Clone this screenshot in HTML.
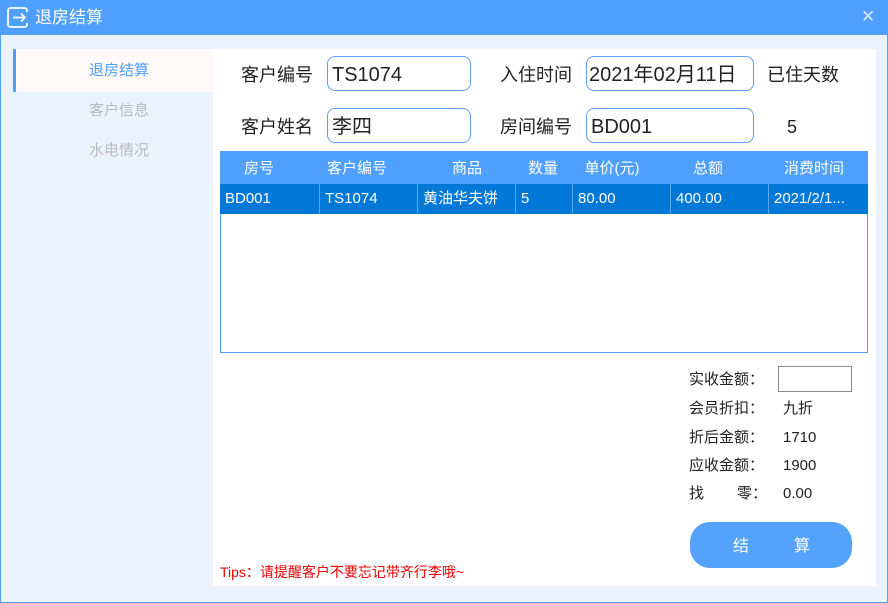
<!DOCTYPE html>
<html><head><meta charset="utf-8"><style>
*{margin:0;padding:0;box-sizing:border-box}
body{width:888px;height:603px;overflow:hidden;background:#eaf2fd;font-family:"Liberation Sans","Noto Sans CJK SC",sans-serif;position:relative;color:#222}
.a{position:absolute;white-space:nowrap;line-height:20px}
.win{position:absolute;left:0;top:0;width:888px;height:603px;border:1px solid #4f9ffe}
.title{position:absolute;left:0;top:0;width:888px;height:35px;background:#4f9ffe;color:#fff;font-size:17px}
.inp{position:absolute;border:1px solid #5d9ef5;border-radius:8px;background:#fff;font-size:20px;line-height:36px;padding-left:4px;color:#222}
.lbl{font-size:18px;color:#222;line-height:24px}
.tbl{position:absolute;left:220px;top:151px;width:648px;height:202px;border:1px solid #4f9ffe;background:#fff}
.hd,.rw{position:absolute;left:220px;width:648px;display:flex}
.hd{top:151px;height:33px;background:#4f9ffe;color:#fff;font-size:15px}
.hd div{text-align:center;line-height:36px}
.rw{top:184px;height:30px;background:#0078d7;color:#fff;font-size:15px}
.rw div{line-height:30px;padding-left:5px;border-right:1px solid #5aa7ee}
.sm{font-size:15px;color:#222}
</style></head><body>
<div class="title">
<svg class="a" style="left:7px;top:7px" width="22" height="21" viewBox="0 0 22 21"><rect x="1" y="1" width="19" height="19" rx="2.5" fill="none" stroke="#fff" stroke-width="1.8"/><rect x="12" y="5" width="10" height="11" fill="#4f9ffe"/><path d="M6 10.5h12M14 6.5l4 4-4 4" fill="none" stroke="#fff" stroke-width="1.8"/></svg>
<div class="a" style="left:35px;top:8px">退房结算</div>
<div class="a" style="left:861px;top:7px;font-size:17px;color:#dbe9ff">✕</div>
</div>
<div class="win"></div>
<div class="a" style="left:13px;top:49px;width:200px;height:43px;background:#fff9f9"></div>
<div class="a" style="left:13px;top:49px;width:3px;height:43px;background:#4f9ffe"></div>
<div class="a" style="left:89px;top:61px;font-size:15px;color:#4f9ffe">退房结算</div>
<div class="a" style="left:89px;top:101px;font-size:15px;color:#bbb">客户信息</div>
<div class="a" style="left:89px;top:141px;font-size:15px;color:#bbb">水电情况</div>
<div class="a" style="left:213px;top:49px;width:663px;height:537px;background:#fff"></div>

<div class="a lbl" style="left:241px;top:63px">客户编号</div>
<div class="inp" style="left:327px;top:56px;width:144px;height:35px">TS1074</div>
<div class="a lbl" style="left:500px;top:63px">入住时间</div>
<div class="inp" style="left:586px;top:56px;width:168px;height:35px;padding-left:2px">2021年02月11日</div>
<div class="a lbl" style="left:767px;top:63px">已住天数</div>
<div class="a lbl" style="left:241px;top:115px">客户姓名</div>
<div class="inp" style="left:327px;top:108px;width:144px;height:35px">李四</div>
<div class="a lbl" style="left:500px;top:115px">房间编号</div>
<div class="inp" style="left:586px;top:108px;width:168px;height:35px">BD001</div>
<div class="a lbl" style="left:787px;top:115px">5</div>

<div class="tbl"></div>
<div class="hd"><div style="width:78px">房号</div><div style="width:118px">客户编号</div><div style="width:102px">商品</div><div style="width:50px">数量</div><div style="width:88px">单价(元)</div><div style="width:104px">总额</div><div style="width:108px">消费时间</div></div>
<div class="rw"><div style="width:100px">BD001</div><div style="width:98px">TS1074</div><div style="width:98px">黄油华夫饼</div><div style="width:57px">5</div><div style="width:98px">80.00</div><div style="width:98px">400.00</div><div style="width:99px;border:none">2021/2/1...</div></div>

<div class="a sm" style="left:689px;top:370px">实收金额：</div>
<div class="a" style="left:778px;top:366px;width:74px;height:26px;border:1px solid #888;background:#fff"></div>
<div class="a sm" style="left:689px;top:399px">会员折扣：</div><div class="a sm" style="left:783px;top:399px">九折</div>
<div class="a sm" style="left:689px;top:428px">折后金额：</div><div class="a sm" style="left:783px;top:428px">1710</div>
<div class="a sm" style="left:689px;top:456px">应收金额：</div><div class="a sm" style="left:783px;top:456px">1900</div>
<div class="a sm" style="left:689px;top:484px">找</div><div class="a sm" style="left:737px;top:484px">零：</div><div class="a sm" style="left:783px;top:484px">0.00</div>
<div class="a" style="left:690px;top:522px;width:162px;height:46px;border-radius:20px;background:#55a2fd;color:#fff;font-size:16px;line-height:46px"><span class="a" style="left:43px;top:15px">结</span><span class="a" style="left:104px;top:15px">算</span></div>
<div class="a" style="left:220px;top:562px;font-size:14px;color:#e00">Tips：请提醒客户不要忘记带齐行李哦~</div>
</body></html>
